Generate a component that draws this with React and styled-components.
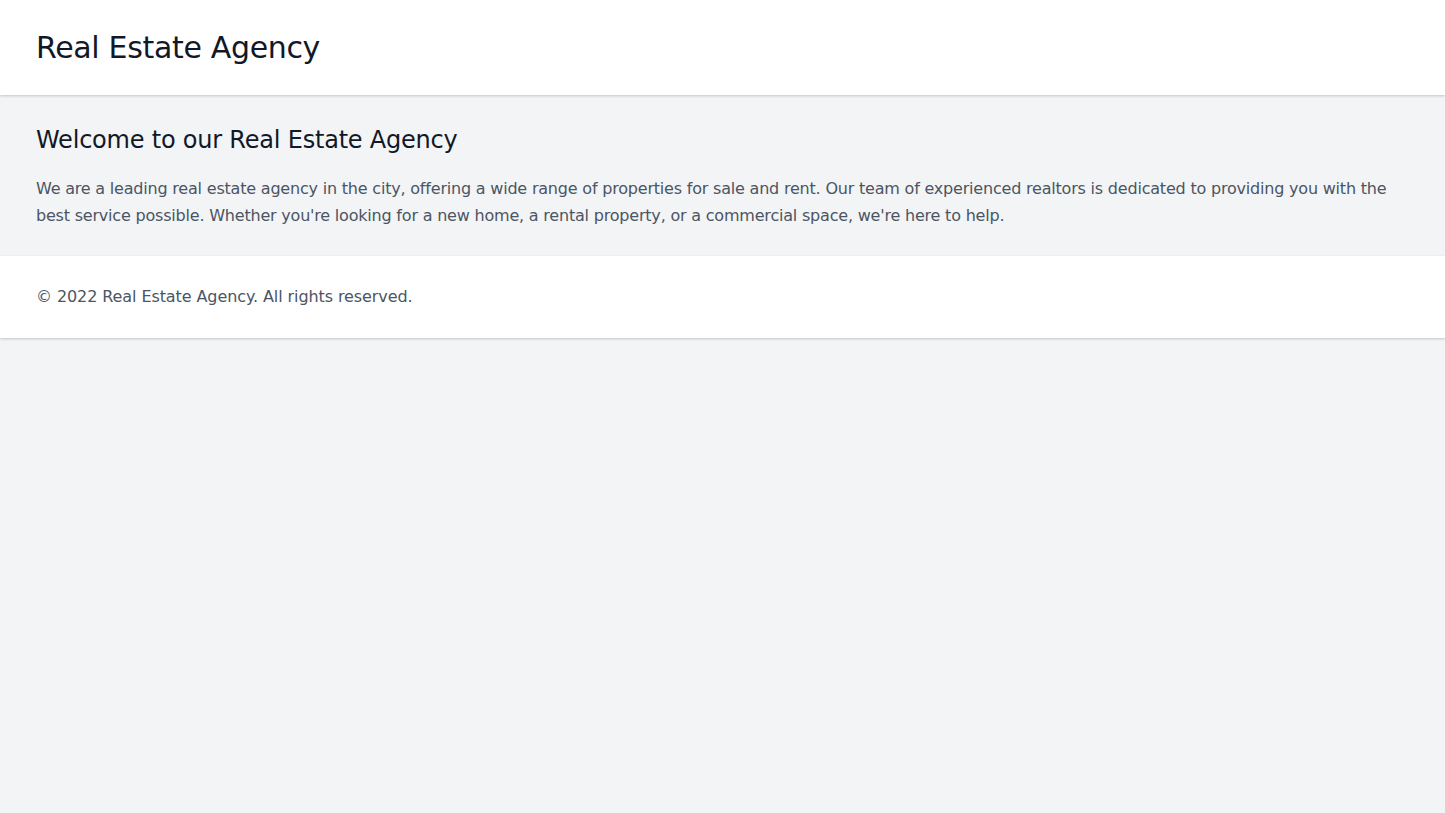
import React from 'react';
import styled, { createGlobalStyle } from 'styled-components';

const GlobalStyle = createGlobalStyle`
  html, body {
    margin: 0;
    padding: 0;
    background: #f3f4f6;
    font-family: "DejaVu Sans", "Noto Sans", sans-serif;
  }
  * {
    box-sizing: border-box;
  }
`;

const Page = styled.div`
  min-height: 813px;
  background: #f3f4f6;
`;

const Header = styled.header`
  height: 95px;
  display: flex;
  align-items: center;
  padding: 0 36px;
  background: #ffffff;
  box-shadow: 0 1px 3px rgba(0, 0, 0, 0.12), 0 1px 2px rgba(0, 0, 0, 0.08);
  position: relative;
`;

const Logo = styled.h1`
  margin: 0;
  font-size: 30px;
  font-weight: 400;
  line-height: 36px;
  letter-spacing: -0.33px;
  color: #111827;
`;

const Main = styled.main`
  padding: 27px 36px 27px;
`;

const Title = styled.h2`
  margin: 0 0 17px;
  font-size: 24px;
  font-weight: 400;
  line-height: 36px;
  letter-spacing: -0.21px;
  color: #111827;
`;

const Text = styled.p`
  margin: 0;
  font-size: 16px;
  line-height: 27px;
  letter-spacing: -0.2px;
  color: #4b5563;
`;

const Footer = styled.footer`
  height: 82px;
  display: flex;
  align-items: center;
  padding: 0 36px;
  background: #ffffff;
  box-shadow: 0 1px 3px rgba(0, 0, 0, 0.12), 0 1px 2px rgba(0, 0, 0, 0.08);
`;

const FooterText = styled.p`
  margin: 0;
  font-size: 16px;
  line-height: 24px;
  letter-spacing: -0.09px;
  color: #4b5563;
`;

const App = () => {
  return (
    <Page>
      <GlobalStyle />
      <Header>
        <Logo>Real Estate Agency</Logo>
      </Header>
      <Main>
        <Title>Welcome to our Real Estate Agency</Title>
        <Text>
          We are a leading real estate agency in the city, offering a wide range of properties for sale and
          rent. Our team of experienced realtors is dedicated to providing you with the best service possible.
          Whether you're looking for a new home, a rental property, or a commercial space, we're here to help.
        </Text>
      </Main>
      <Footer>
        <FooterText>© 2022 Real Estate Agency. All rights reserved.</FooterText>
      </Footer>
    </Page>
  );
};

export default App;
